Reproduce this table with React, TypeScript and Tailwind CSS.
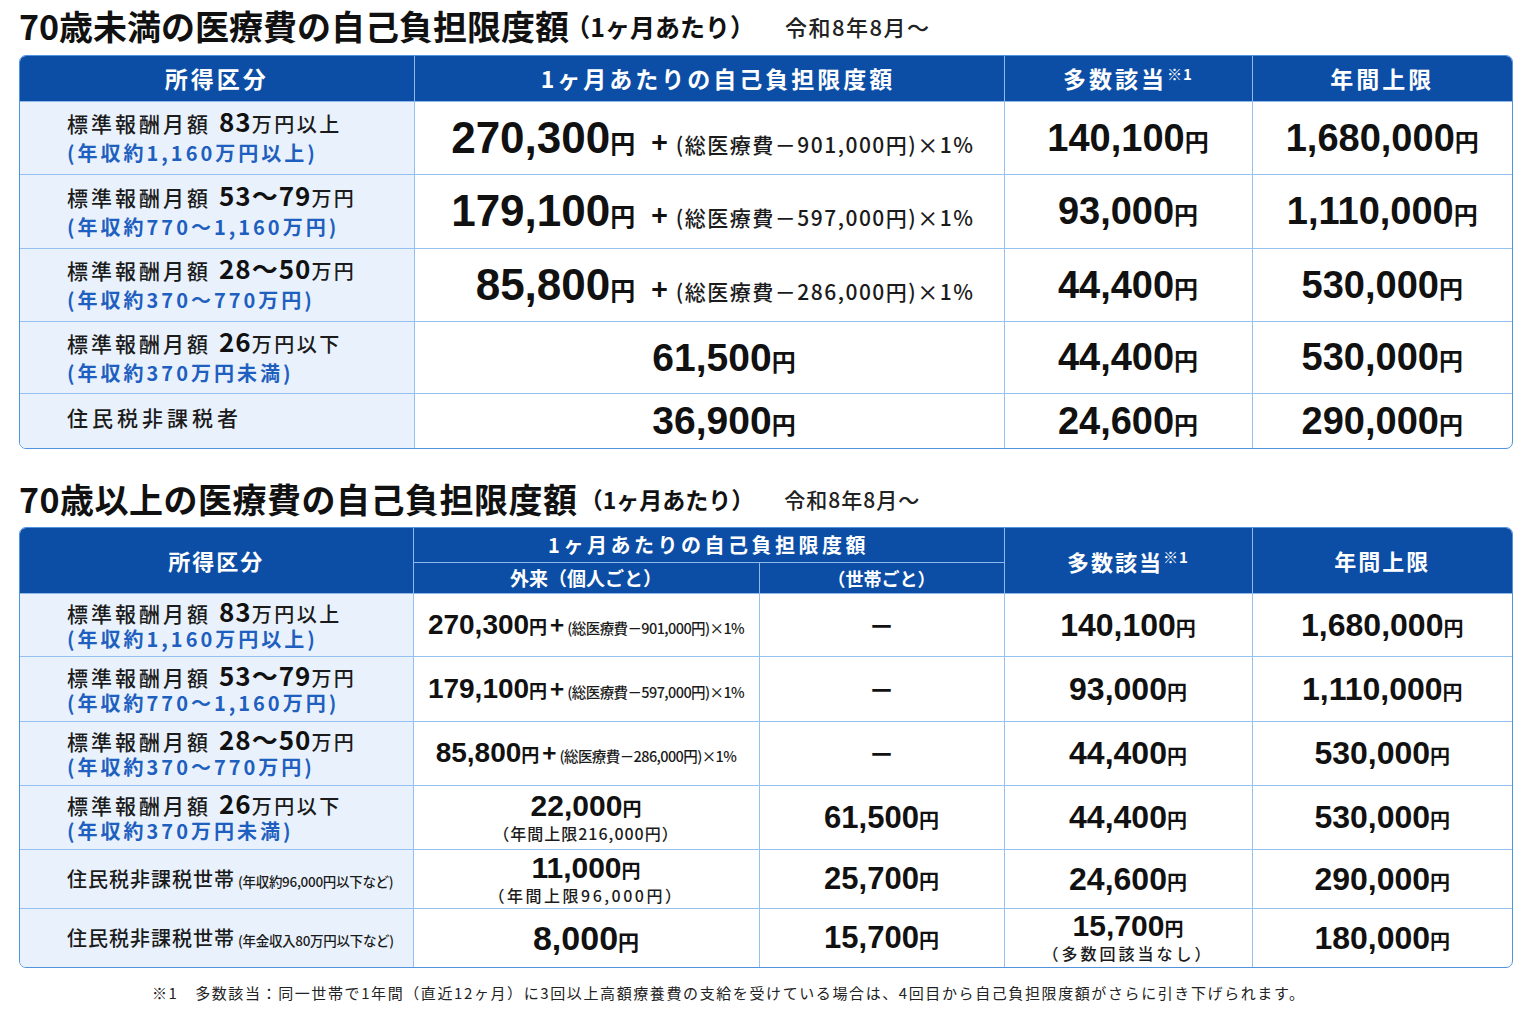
import React from "react";

const JP = "font-['Noto_Sans_CJK_JP','Noto_Sans',sans-serif]";
const NUM = "font-['Liberation_Sans','Noto_Sans_CJK_JP',sans-serif]";

function Yen({ v, num, yen }: { v: string; num: string; yen: string }) {
  return (
    <span className="inline-flex items-baseline whitespace-nowrap leading-none">
      <span className={NUM + " font-bold text-[#111] leading-none " + num}>{v}</span>
      <span className={JP + " font-bold text-[#111] leading-none " + yen}>円</span>
    </span>
  );
}

function Income({ amt, unit, sub, lh }: { amt: string; unit: string; sub: string; lh: string }) {
  return (
    <div className="flex flex-col whitespace-nowrap">
      <div className={"text-[21px] tracking-[3px] text-[#1b1b1b] font-medium " + lh}>
        標準報酬月額
        <span className="ml-[8px] text-[26px] font-bold tracking-[1px] text-[#111] leading-none">{amt}</span>
        <span className="text-[20px] tracking-[2.5px] leading-none">{unit}</span>
      </div>
      <div className={"text-[20px] tracking-[3px] text-[#1f5fbf] font-semibold " + lh}>{sub}</div>
    </div>
  );
}

const TH = "bg-[#0c4ea6] text-white font-bold border border-[#8fb9ea] text-center p-0 leading-none";
const TD = "border border-[#94c1ef] p-0 align-middle";
const TD1 = "border border-[#94c1ef] p-0 align-middle bg-[#e9f2fc] pl-[47px] text-left";

function Formula1({ v, f }: { v: string; f: string }) {
  return (
    <div className="flex items-baseline justify-end pr-[29px] leading-none">
      <Yen v={v} num="text-[44px]" yen="text-[25px]" />
      <span className="ml-[16px] mr-[8px] text-[28px] font-bold text-[#111] leading-none">+</span>
      <span className="text-[21px] tracking-[1.5px] text-[#1b1b1b] font-medium leading-none">{f}</span>
    </div>
  );
}

function Formula2({ v, f }: { v: string; f: string }) {
  return (
    <div className="flex items-baseline justify-center leading-none">
      <Yen v={v} num="text-[28px]" yen="text-[18px]" />
      <span className="mx-[3px] text-[24px] font-bold text-[#111] leading-none">+</span>
      <span className="text-[14.5px] tracking-[-0.6px] text-[#1b1b1b] font-medium leading-none">{f}</span>
    </div>
  );
}

function C({ children }: { children: React.ReactNode }) {
  return <div className="flex flex-col items-center justify-center">{children}</div>;
}

function Dash() {
  return (
    <C>
      <span className="text-[26px] font-bold leading-none">－</span>
    </C>
  );
}

export default function App() {
  return (
    <div className={JP + " w-[1536px] h-[1024px] bg-white overflow-hidden pl-[19px] text-[#111]"}>
      {/* Title 1 */}
      <div className="h-[55px] pb-[3px] flex items-center whitespace-nowrap">
        <h1 className="text-[34px] font-bold tracking-[0px] text-[#111] leading-none">70歳未満の医療費の自己負担限度額</h1>
        <span className="ml-[-4px] text-[25px] font-bold text-[#111] leading-none">（1ヶ月あたり）</span>
        <span className="ml-[30px] text-[22px] tracking-[1.5px] font-medium text-[#222] leading-none">令和8年8月～</span>
      </div>

      {/* Table 1 */}
      <div className="w-[1494px] rounded-[7px] border-[1.5px] border-[#5293de] overflow-hidden">
        <table className="w-full table-fixed border-collapse border-hidden">
          <colgroup>
            <col className="w-[394px]" />
            <col className="w-[590px]" />
            <col className="w-[248px]" />
            <col />
          </colgroup>
          <thead>
            <tr className="h-[45px] text-[23px] tracking-[3px]">
              <th className={TH}>所得区分</th>
              <th className={TH + " pl-[18px]"}>1ヶ月あたりの自己負担限度額</th>
              <th className={TH}>
                多数該当<span className="text-[15px] tracking-[1px] align-[8px]">※1</span>
              </th>
              <th className={TH}>年間上限</th>
            </tr>
          </thead>
          <tbody>
            <tr className="h-[73px]">
              <td className={TD1}>
                <Income amt="83" unit="万円以上" sub="(年収約1,160万円以上)" lh="leading-[29px]" />
              </td>
              <td className={TD}>
                <Formula1 v="270,300" f="(総医療費－901,000円)×1%" />
              </td>
              <td className={TD}>
                <C><Yen v="140,100" num="text-[38px]" yen="text-[24px]" /></C>
              </td>
              <td className={TD}>
                <C><Yen v="1,680,000" num="text-[38px]" yen="text-[24px]" /></C>
              </td>
            </tr>
            <tr className="h-[74px]">
              <td className={TD1}>
                <Income amt="53～79" unit="万円" sub="(年収約770～1,160万円)" lh="leading-[29px]" />
              </td>
              <td className={TD}>
                <Formula1 v="179,100" f="(総医療費－597,000円)×1%" />
              </td>
              <td className={TD}>
                <C><Yen v="93,000" num="text-[38px]" yen="text-[24px]" /></C>
              </td>
              <td className={TD}>
                <C><Yen v="1,110,000" num="text-[38px]" yen="text-[24px]" /></C>
              </td>
            </tr>
            <tr className="h-[73px]">
              <td className={TD1}>
                <Income amt="28～50" unit="万円" sub="(年収約370～770万円)" lh="leading-[29px]" />
              </td>
              <td className={TD}>
                <Formula1 v="85,800" f="(総医療費－286,000円)×1%" />
              </td>
              <td className={TD}>
                <C><Yen v="44,400" num="text-[38px]" yen="text-[24px]" /></C>
              </td>
              <td className={TD}>
                <C><Yen v="530,000" num="text-[38px]" yen="text-[24px]" /></C>
              </td>
            </tr>
            <tr className="h-[72px]">
              <td className={TD1}>
                <Income amt="26" unit="万円以下" sub="(年収約370万円未満)" lh="leading-[29px]" />
              </td>
              <td className={TD}>
                <div className="flex justify-center pl-[30px]"><Yen v="61,500" num="text-[39px]" yen="text-[24px]" /></div>
              </td>
              <td className={TD}>
                <C><Yen v="44,400" num="text-[38px]" yen="text-[24px]" /></C>
              </td>
              <td className={TD}>
                <C><Yen v="530,000" num="text-[38px]" yen="text-[24px]" /></C>
              </td>
            </tr>
            <tr className="h-[55px]">
              <td className={TD1}>
                <div className="text-[21px] tracking-[4px] font-medium text-[#1b1b1b] leading-none pb-[6px]">住民税非課税者</div>
              </td>
              <td className={TD}>
                <div className="flex justify-center pl-[30px]"><Yen v="36,900" num="text-[39px]" yen="text-[24px]" /></div>
              </td>
              <td className={TD}>
                <C><Yen v="24,600" num="text-[38px]" yen="text-[24px]" /></C>
              </td>
              <td className={TD}>
                <C><Yen v="290,000" num="text-[38px]" yen="text-[24px]" /></C>
              </td>
            </tr>
          </tbody>
        </table>
      </div>

      {/* Title 2 */}
      <div className="h-[78px] pt-[22px] flex items-center whitespace-nowrap">
        <h2 className="text-[34px] font-bold tracking-[0.5px] text-[#111] leading-none">70歳以上の医療費の自己負担限度額</h2>
        <span className="ml-[2px] text-[23px] font-bold text-[#111] leading-none">（1ヶ月あたり）</span>
        <span className="ml-[30px] text-[21px] tracking-[1px] font-medium text-[#222] leading-none">令和8年8月～</span>
      </div>

      {/* Table 2 */}
      <div className="w-[1494px] rounded-[7px] border-[1.5px] border-[#5293de] overflow-hidden">
        <table className="w-full table-fixed border-collapse border-hidden">
          <colgroup>
            <col className="w-[393px]" />
            <col className="w-[346px]" />
            <col className="w-[245px]" />
            <col className="w-[248px]" />
            <col />
          </colgroup>
          <thead>
            <tr className="h-[34px]">
              <th rowSpan={2} className={TH + " text-[22px] tracking-[2px]"}>所得区分</th>
              <th colSpan={2} className={TH + " text-[20px] tracking-[3.5px]"}>1ヶ月あたりの自己負担限度額</th>
              <th rowSpan={2} className={TH + " text-[22px] tracking-[2px]"}>
                多数該当<span className="text-[15px] tracking-[1px] align-[8px]">※1</span>
              </th>
              <th rowSpan={2} className={TH + " text-[22px] tracking-[2px]"}>年間上限</th>
            </tr>
            <tr className="h-[31px]">
              <th className={TH + " text-[19px] tracking-[0px] border-t-[#c9defa]"}>外来（個人ごと）</th>
              <th className={TH + " text-[18px] tracking-[0px] border-t-[#c9defa]"}>（世帯ごと）</th>
            </tr>
          </thead>
          <tbody>
            <tr className="h-[63px]">
              <td className={TD1}>
                <Income amt="83" unit="万円以上" sub="(年収約1,160万円以上)" lh="leading-[26px]" />
              </td>
              <td className={TD}>
                <Formula2 v="270,300" f="(総医療費－901,000円)×1%" />
              </td>
              <td className={TD}><Dash /></td>
              <td className={TD}>
                <C><Yen v="140,100" num="text-[32px]" yen="text-[20px]" /></C>
              </td>
              <td className={TD}>
                <C><Yen v="1,680,000" num="text-[32px]" yen="text-[20px]" /></C>
              </td>
            </tr>
            <tr className="h-[65px]">
              <td className={TD1}>
                <Income amt="53～79" unit="万円" sub="(年収約770～1,160万円)" lh="leading-[26px]" />
              </td>
              <td className={TD}>
                <Formula2 v="179,100" f="(総医療費－597,000円)×1%" />
              </td>
              <td className={TD}><Dash /></td>
              <td className={TD}>
                <C><Yen v="93,000" num="text-[32px]" yen="text-[20px]" /></C>
              </td>
              <td className={TD}>
                <C><Yen v="1,110,000" num="text-[32px]" yen="text-[20px]" /></C>
              </td>
            </tr>
            <tr className="h-[64px]">
              <td className={TD1}>
                <Income amt="28～50" unit="万円" sub="(年収約370～770万円)" lh="leading-[26px]" />
              </td>
              <td className={TD}>
                <Formula2 v="85,800" f="(総医療費－286,000円)×1%" />
              </td>
              <td className={TD}><Dash /></td>
              <td className={TD}>
                <C><Yen v="44,400" num="text-[32px]" yen="text-[20px]" /></C>
              </td>
              <td className={TD}>
                <C><Yen v="530,000" num="text-[32px]" yen="text-[20px]" /></C>
              </td>
            </tr>
            <tr className="h-[64px]">
              <td className={TD1}>
                <Income amt="26" unit="万円以下" sub="(年収約370万円未満)" lh="leading-[26px]" />
              </td>
              <td className={TD}>
                <C>
                  <div className="h-[28px] flex items-end"><Yen v="22,000" num="text-[30px]" yen="text-[19px]" /></div>
                  <div className="mt-[4px] text-[16px] tracking-[1px] font-medium leading-none text-[#1b1b1b]">（年間上限216,000円）</div>
                </C>
              </td>
              <td className={TD}>
                <C><Yen v="61,500" num="text-[31px]" yen="text-[20px]" /></C>
              </td>
              <td className={TD}>
                <C><Yen v="44,400" num="text-[32px]" yen="text-[20px]" /></C>
              </td>
              <td className={TD}>
                <C><Yen v="530,000" num="text-[32px]" yen="text-[20px]" /></C>
              </td>
            </tr>
            <tr className="h-[59px]">
              <td className={TD1}>
                <div className="whitespace-nowrap flex items-baseline leading-none">
                  <span className="text-[20px] tracking-[1px] font-medium text-[#1b1b1b]">住民税非課税世帯</span>
                  <span className="ml-[3px] text-[13.5px] tracking-[-0.3px] font-medium text-[#1b1b1b]">(年収約96,000円以下など)</span>
                </div>
              </td>
              <td className={TD}>
                <C>
                  <div className="h-[28px] flex items-end"><Yen v="11,000" num="text-[30px]" yen="text-[19px]" /></div>
                  <div className="mt-[4px] text-[16px] tracking-[2.5px] font-medium leading-none text-[#1b1b1b]">（年間上限96,000円）</div>
                </C>
              </td>
              <td className={TD}>
                <C><Yen v="25,700" num="text-[31px]" yen="text-[20px]" /></C>
              </td>
              <td className={TD}>
                <C><Yen v="24,600" num="text-[32px]" yen="text-[20px]" /></C>
              </td>
              <td className={TD}>
                <C><Yen v="290,000" num="text-[32px]" yen="text-[20px]" /></C>
              </td>
            </tr>
            <tr className="h-[59px]">
              <td className={TD1}>
                <div className="whitespace-nowrap flex items-baseline leading-none">
                  <span className="text-[20px] tracking-[1px] font-medium text-[#1b1b1b]">住民税非課税世帯</span>
                  <span className="ml-[3px] text-[13.5px] tracking-[-0.3px] font-medium text-[#1b1b1b]">(年金収入80万円以下など)</span>
                </div>
              </td>
              <td className={TD}>
                <C><Yen v="8,000" num="text-[34px]" yen="text-[21px]" /></C>
              </td>
              <td className={TD}>
                <C><Yen v="15,700" num="text-[31px]" yen="text-[20px]" /></C>
              </td>
              <td className={TD}>
                <C>
                  <div className="h-[26px] flex items-end"><Yen v="15,700" num="text-[30px]" yen="text-[19px]" /></div>
                  <div className="mt-[4px] text-[16px] tracking-[3px] font-medium leading-none text-[#1b1b1b]">（多数回該当なし）</div>
                </C>
              </td>
              <td className={TD}>
                <C><Yen v="180,000" num="text-[32px]" yen="text-[20px]" /></C>
              </td>
            </tr>
          </tbody>
        </table>
      </div>

      {/* Footnote */}
      <div className="h-[48px] flex items-center pl-[133px] whitespace-nowrap text-[15px] tracking-[1.6px] text-[#222] leading-none">
        ※1　多数該当：同一世帯で1年間（直近12ヶ月）に3回以上高額療養費の支給を受けている場合は、4回目から自己負担限度額がさらに引き下げられます。
      </div>
    </div>
  );
}
